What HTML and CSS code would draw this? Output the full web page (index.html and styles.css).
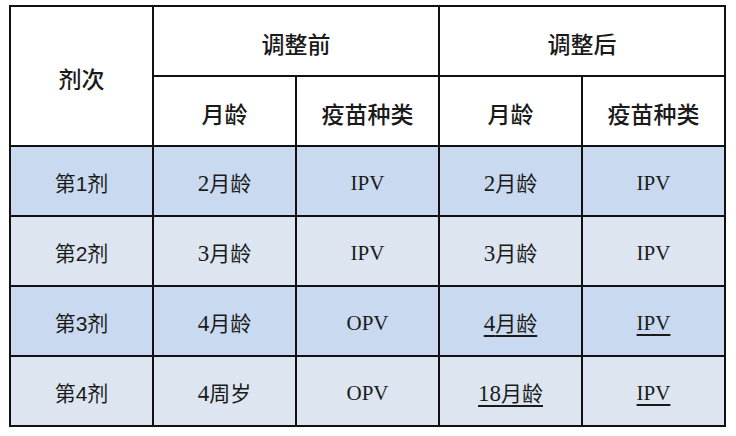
FILE: index.html
```html
<!DOCTYPE html>
<html lang="zh">
<head>
<meta charset="utf-8">
<link rel="stylesheet" href="styles.css">
</head>
<body>
<div class="wrap">
<table class="sched">
  <colgroup><col><col><col><col><col></colgroup>
  <tr class="head">
    <th rowspan="2">剂次</th>
    <th colspan="2">调整前</th>
    <th colspan="2">调整后</th>
  </tr>
  <tr class="head">
    <th>月龄</th>
    <th>疫苗种类</th>
    <th>月龄</th>
    <th>疫苗种类</th>
  </tr>
  <tr class="odd">
    <td class="dose">第<span class="sd">1</span>剂</td>
    <td><span class="sf">2</span>月龄</td>
    <td class="lat">IPV</td>
    <td><span class="sf">2</span>月龄</td>
    <td class="lat">IPV</td>
  </tr>
  <tr class="even">
    <td class="dose">第<span class="sd">2</span>剂</td>
    <td><span class="sf">3</span>月龄</td>
    <td class="lat">IPV</td>
    <td><span class="sf">3</span>月龄</td>
    <td class="lat">IPV</td>
  </tr>
  <tr class="odd">
    <td class="dose">第<span class="sd">3</span>剂</td>
    <td><span class="sf">4</span>月龄</td>
    <td class="lat">OPV</td>
    <td class="em"><span class="sf">4</span>月龄</td>
    <td class="lat em">IPV</td>
  </tr>
  <tr class="even">
    <td class="dose">第<span class="sd">4</span>剂</td>
    <td><span class="sf">4</span>周岁</td>
    <td class="lat">OPV</td>
    <td class="em"><span class="sf">18</span>月龄</td>
    <td class="lat em">IPV</td>
  </tr>
</table>
</div>
</body>
</html>
```

FILE: styles.css
```css
html, body {
  margin: 0;
  padding: 0;
  background: #ffffff;
}
.wrap {
  padding: 5px 0 0 9px;
}
.sched {
  border-collapse: collapse;
  width: 716px;
  table-layout: fixed;
  font-family: "Noto Sans CJK SC", "Liberation Serif", serif;
  color: #1a1a1a;
}
.sched col {
  width: 143px;
}
.sched th, .sched td {
  border: 2px solid #111111;
  height: 64px;
  padding: 4px 0 0 0;
  text-align: center;
  vertical-align: middle;
  line-height: 1;
}
.sched th {
  font-size: 23px;
  font-weight: 500;
  background: #ffffff;
}
.sched td {
  font-size: 21px;
  font-weight: 400;
}
.odd td {
  background: #c9d9ef;
}
.even td {
  background: #dce5f0;
}
.sd {
  font-family: "Liberation Sans", sans-serif;
  font-size: 21px;
}
.sf {
  font-family: "Liberation Serif", serif;
  font-size: 23px;
}
.lat {
  font-family: "Liberation Serif", serif;
  font-size: 22px;
}
.em {
  font-weight: 700;
  text-decoration: underline;
  text-decoration-thickness: 2px;
  text-underline-offset: 4px;
}
```
